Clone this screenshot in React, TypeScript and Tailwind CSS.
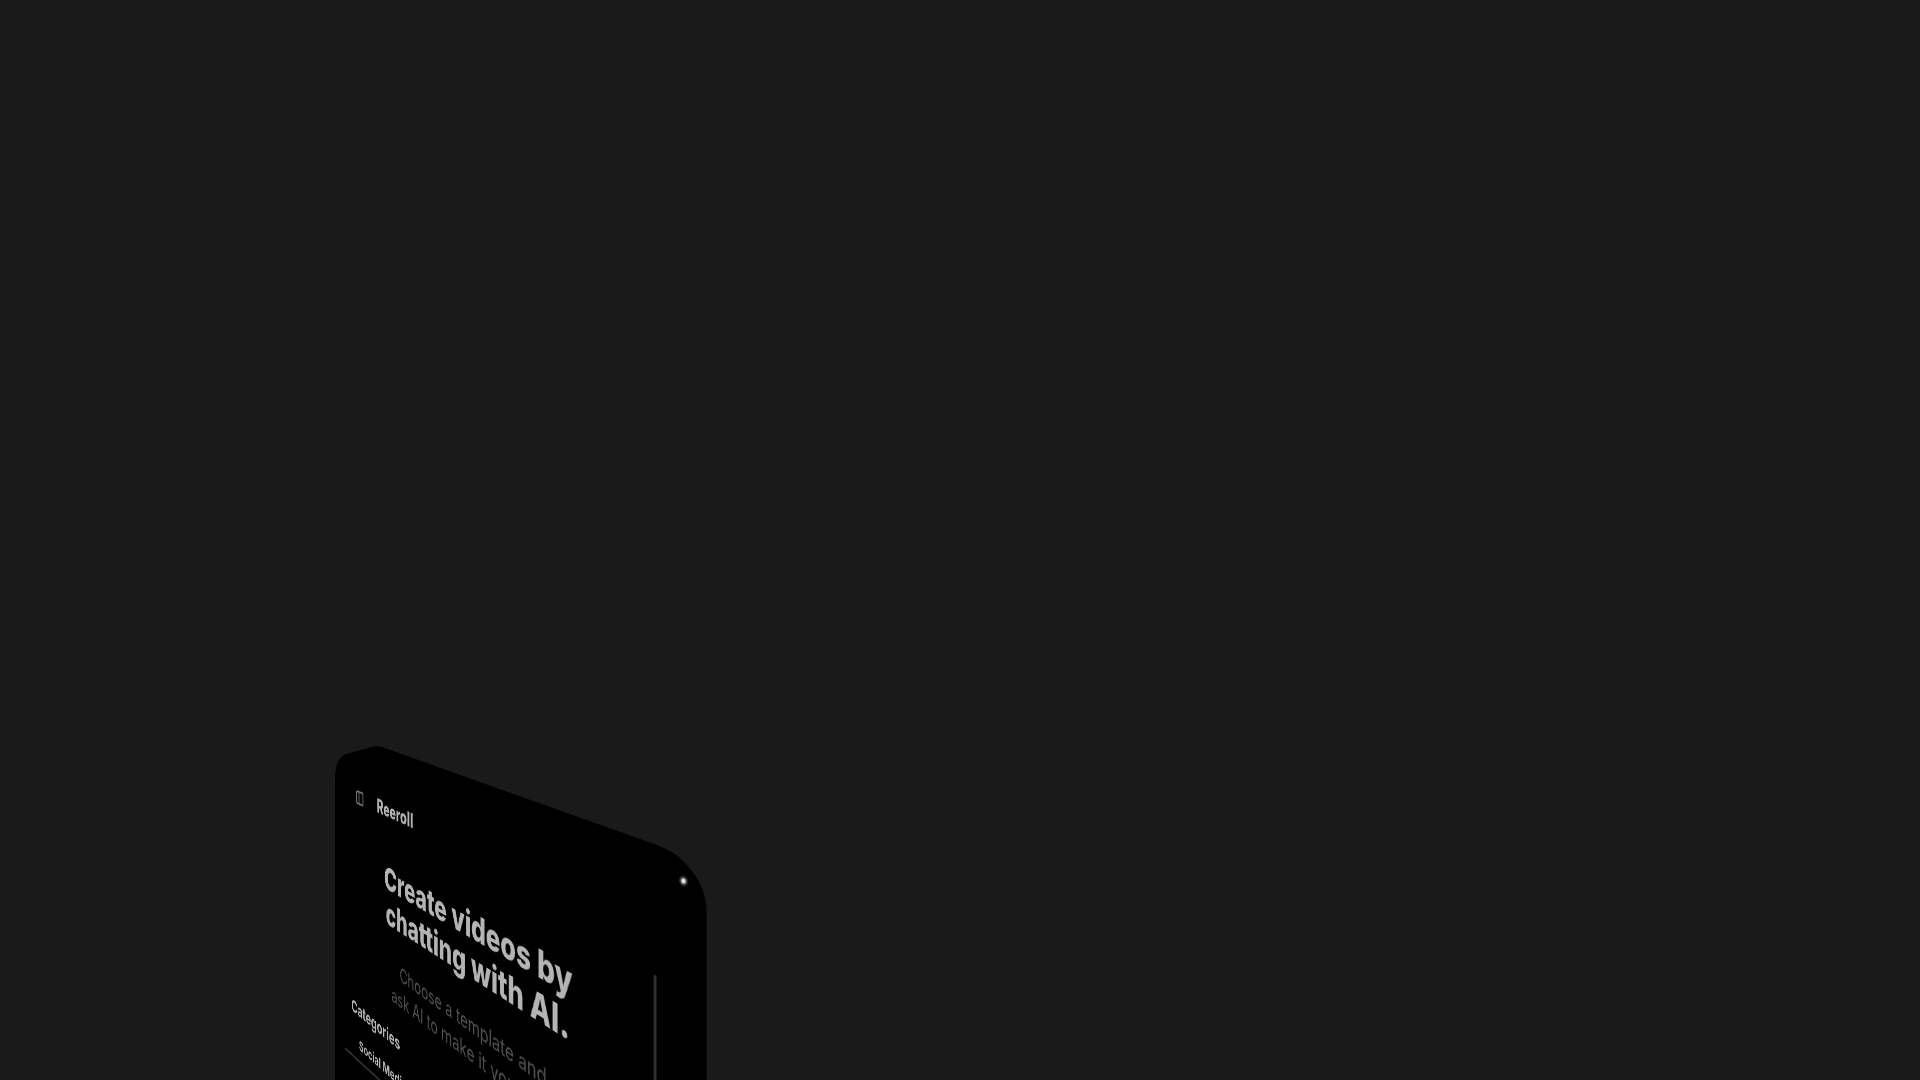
import React from "react";

function PanelIcon() {
  return (
    <svg viewBox="0 0 20 20" className="block h-5 w-5" fill="none" stroke="currentColor" strokeWidth="2.4" aria-hidden="true">
      <rect x="2" y="2" width="16" height="16" rx="2" />
      <path d="M8 2v16" />
    </svg>
  );
}

function PhoneBody() {
  return (
    <svg viewBox="0 0 400 400" className="absolute top-[730px] left-[320px] h-[400px] w-[400px]" aria-hidden="true">
      <defs>
        <radialGradient id="glint">
          <stop offset="0" stopColor="#ffffff" />
          <stop offset="0.3" stopColor="#cfcfcf" />
          <stop offset="0.6" stopColor="#444444" />
          <stop offset="1" stopColor="#000000" />
        </radialGradient>
      </defs>
      <path
        d="M15 400V50C15 36 18 27 26 24L52 17Q57 15 62 17L334 114C348 119 356 124 363 131C377 145 386 160 386.500 180V400Z"
        fill="#000000"
      />
      <ellipse cx="363.500" cy="151" rx="5" ry="6" fill="url(#glint)" transform="rotate(-20 363.500 151)" />
    </svg>
  );
}

function Screen() {
  return (
    <main className="absolute top-0 left-0 w-[630px] origin-top-left font-[Inter,sans-serif] text-[#b4b4b4] [transform:matrix3d(0.1615,-0.4718,0,-0.00085,0,0.9,0,0,0,0,1,0,415.1,925.6,0,1.268)]">
      <header className="flex items-center gap-8 pt-16 pl-[78px]">
        <button type="button" aria-label="Toggle sidebar" className="text-[#747474]">
          <PanelIcon />
        </button>
        <span className="text-2xl leading-6 font-extrabold">Reeroll</span>
      </header>
      <div className="mt-7 mr-[50px] border-r-[3px] border-[#303030] pb-20 pl-[50px]">
        <h1 className="pt-6 text-center text-[40px] leading-11 font-extrabold">
          Create videos by
          <br />
          chatting with AI.
        </h1>
        <p className="pt-7 text-center text-2xl leading-8 text-[#505050]">
          Choose a template and
          <br />
          ask AI to make it your own
        </p>
        <h2 className="pt-6 pl-4 text-[22px] leading-7 font-bold">Categories</h2>
        <h3 className="mt-5 border-b-[3px] border-[#303030] pb-2 pl-9 text-lg leading-6 font-bold">Social Media</h3>
      </div>
    </main>
  );
}

export default function App() {
  return (
    <div className="relative h-screen w-full overflow-hidden bg-[#1a1a1a]">
      <PhoneBody />
      <Screen />
    </div>
  );
}
